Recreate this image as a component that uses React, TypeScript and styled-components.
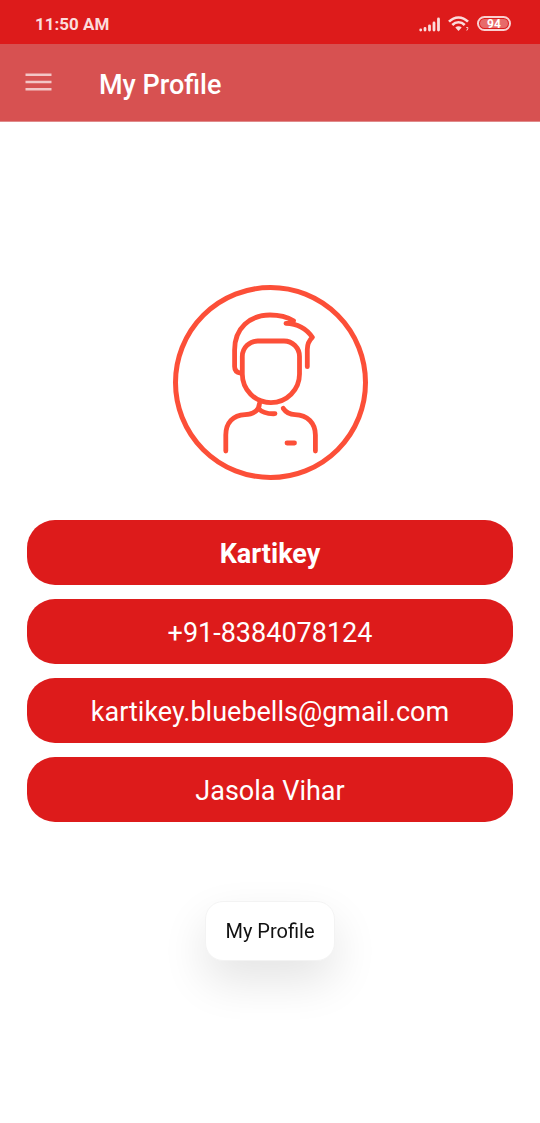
import React from "react";
import styled, { createGlobalStyle } from "styled-components";

const GlobalStyle = createGlobalStyle`
  * { box-sizing: border-box; }
  body {
    margin: 0;
    background: #fff;
    font-family: Roboto, "Liberation Sans", sans-serif;
  }
`;

const Screen = styled.div`
  min-height: 100vh;
  background: #fff;
`;

const StatusBar = styled.div`
  display: flex;
  align-items: center;
  justify-content: space-between;
  height: 44px;
  padding: 4px 29px 0 35px;
  background: #dd1b1b;
`;

const Clock = styled.span`
  color: #fbdcdc;
  font-size: 17px;
  font-weight: 700;
  line-height: 20px;
`;

const StatusIcons = styled.div`
  display: flex;
  align-items: center;
  gap: 7px;
  padding-bottom: 1px;
`;

const Battery = styled.span`
  display: flex;
  width: 34px;
  height: 15px;
  padding: 1px;
  border: 2px solid #f9d0d0;
  border-radius: 8px;
`;

const BatteryLevel = styled.span`
  flex: 1;
  border-radius: 5px;
  background: #e76a6a;
  color: #fff;
  font-size: 12px;
  font-weight: 700;
  line-height: 10px;
  text-align: center;
`;

const AppBar = styled.header`
  display: flex;
  align-items: center;
  gap: 47px;
  height: 78px;
  padding: 0 24px;
  background: #d75151;
  border-bottom: 1px solid #e08a8a;
`;

const MenuButton = styled.button`
  display: flex;
  padding: 0 0 2px;
  border: 0;
  background: none;
  cursor: pointer;
`;

const Title = styled.h1`
  margin: 0;
  padding-top: 4px;
  color: #fff;
  font-size: 27px;
  font-weight: 500;
  line-height: 32px;
`;

const Profile = styled.main`
  display: flex;
  flex-direction: column;
  align-items: center;
  gap: 38px;
  padding: 163px 27px 0;
`;

const Details = styled.ul`
  display: flex;
  flex-direction: column;
  gap: 14px;
  width: 100%;
  margin: 0;
  padding: 0;
  list-style: none;
`;

const Detail = styled.li<{ $strong?: boolean }>`
  padding: 18px 16px 15px;
  border-radius: 28px;
  background: #dd1b1b;
  color: #fff;
  font-size: 27px;
  font-weight: ${(p) => (p.$strong ? 700 : 400)};
  line-height: 32px;
  text-align: center;
`;

const ToastLayer = styled.div`
  position: fixed;
  right: 0;
  bottom: 162px;
  left: 0;
  display: flex;
  justify-content: center;
  pointer-events: none;
`;

const Toast = styled.div`
  padding: 18px 19px;
  border: 1px solid #f3f3f3;
  border-radius: 18px;
  background: #fff;
  box-shadow: 0 20px 46px rgba(0, 0, 0, 0.11);
  color: #111;
  font-size: 20px;
  line-height: 22px;
`;

const SignalIcon = () => (
  <svg width="22" height="16" viewBox="0 0 22 16" stroke="#fbdcdc" strokeWidth="2.800" strokeLinecap="round" aria-hidden="true">
    <path d="M1.700 14v0M6 14v-1.500M10.500 14V9.800M15 14V7M19.500 14V3" />
  </svg>
);

const WifiIcon = () => (
  <svg width="22" height="17" viewBox="0 0 22 17" fill="none" stroke="#fbdcdc" strokeWidth="2.600" aria-hidden="true">
    <path d="M1 6.700C6.500 1 14.500 1 20 6.700M4.300 10c3.600-3.700 8.800-3.700 12.400 0" />
    <path d="M7.300 12.600c2-1.900 4.400-1.900 6.400 0L10.500 16Z" fill="#fbdcdc" stroke="none" />
    <path d="M18.300 12.500h1.500v1l-1 2" strokeWidth="1" />
  </svg>
);

const MenuIcon = () => (
  <svg width="28" height="20" viewBox="0 0 28 20" stroke="#f3c6c6" strokeWidth="2.500" aria-hidden="true">
    <path d="M1.500 2.700h26M1.500 10h26M1.500 17.300h26" />
  </svg>
);

const Avatar = () => (
  <svg
    width="197"
    height="197"
    viewBox="0 0 197 197"
    fill="none"
    stroke="#fc4f38"
    strokeWidth="5"
    strokeLinecap="round"
    strokeLinejoin="round"
    role="img"
    aria-label="Profile picture"
  >
    <circle cx="98.500" cy="97.500" r="95" />
    <g strokeWidth="4.800" transform="translate(1 0)">
      <path d="M85.500 56H111a15.500 15.500 0 0 1 15.500 15.500V89a28.600 28.600 0 0 1-57.200 0V71.500A15.500 15.500 0 0 1 85.500 56Z" />
      <path d="M67.500 88C63.500 87.500 61.600 85.500 61.600 81.500V65C61.600 43 77 30 97 30C106 30 113.500 31.500 120.500 35.700C118.500 38 116 38.600 113 38.300C124 38.500 133 43 139.400 52.300C136 55.500 134.300 59.500 134.300 64.500V81.700" />
      <path d="M118 36l-5 2.300 8-.5Z" fill="#fc4f38" strokeWidth="2" />
      <path d="M52.800 166V150C52.800 138 60 130 72 129.600C80.500 129.500 86 125.500 86.500 118.500" />
      <path d="M85.500 123.500C89 127.500 94 129 102 128.700" />
      <path d="M110.200 123.300C113 127.500 116.500 129.500 122 129.600C134.500 130 142.400 138 142.400 150V166" />
      <path d="M114 158h7.500" />
    </g>
  </svg>
);

export default function App() {
  return (
    <Screen>
      <GlobalStyle />
      <StatusBar>
        <Clock>11:50 AM</Clock>
        <StatusIcons>
          <SignalIcon />
          <WifiIcon />
          <Battery>
            <BatteryLevel>94</BatteryLevel>
          </Battery>
        </StatusIcons>
      </StatusBar>
      <AppBar>
        <MenuButton type="button" aria-label="Open menu">
          <MenuIcon />
        </MenuButton>
        <Title>My Profile</Title>
      </AppBar>
      <Profile>
        <Avatar />
        <Details>
          <Detail $strong>Kartikey</Detail>
          <Detail>+91-8384078124</Detail>
          <Detail>kartikey.bluebells@gmail.com</Detail>
          <Detail>Jasola Vihar</Detail>
        </Details>
      </Profile>
      <ToastLayer>
        <Toast role="status">My Profile</Toast>
      </ToastLayer>
    </Screen>
  );
}
